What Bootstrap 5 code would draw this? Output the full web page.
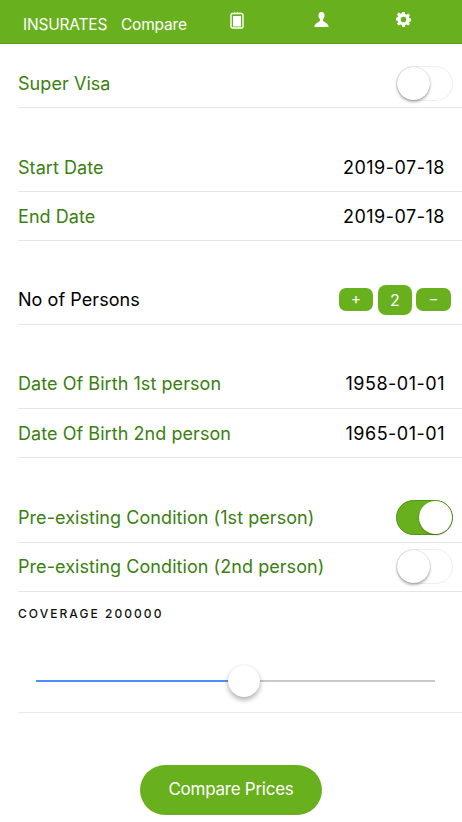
<!DOCTYPE html>
<html lang="en">
<head>
<meta charset="utf-8">
<title>Insurates Compare</title>
<link href="https://cdn.jsdelivr.net/npm/bootstrap@5.3.0/dist/css/bootstrap.min.css" rel="stylesheet">
<style>
html,body{height:822px;overflow:hidden;background:#fff}
body{font-family:Inter,"Liberation Sans",sans-serif;color:#000}
.hdr{height:44px;background:#68b01d;border-bottom:1px solid #5da318;color:#fff;padding-left:23px}
.hdr-title{font-size:15.5px;letter-spacing:-.2px;width:98px;padding-top:6px}
.hdr-cmp{font-size:15.5px;letter-spacing:-.2px;width:109px;padding-top:6px}
.hdr-ico{position:relative;display:flex}
.ico1{margin-right:70px;margin-top:-4px}
.ico2{margin-right:67px;margin-top:-4px}
.ico3{margin-top:-4px}
.sheet{padding-left:18px}
.rowline{height:49px;border-bottom:1px solid #e6e6e6;font-size:18px;letter-spacing:.06px;padding-right:18px}
.lift{padding-bottom:1px}
.grn{color:#3a8010}
.gap-top{margin-top:35px}
.gap-extra{margin-top:36px}
.first{margin-top:15px}
.val{font-size:18px;color:#000;letter-spacing:.5px;margin-right:-1px}
.tgl{width:57px;height:35px;border-radius:18px;border:1px solid #eee;background:#fff;position:relative;margin-right:-9px}
.tgl::after{content:"";position:absolute;left:0;top:0;width:33px;height:33px;border-radius:50%;background:#fff;box-shadow:0 2px 3px rgba(0,0,0,.3),0 0 1px rgba(0,0,0,.3)}
.tgl.on{background:#68b01d;border-color:#4f9512}
.tgl.on::after{left:22px;box-shadow:0 1px 2px rgba(0,0,0,.3)}
.stp{background:#68b01d;color:#fff;border:0;border-radius:7px;width:34px;height:23px;font-size:15px;line-height:22px;padding:0;text-align:center}
.stp.mid{width:34px;height:30px;line-height:30px;font-size:16px;border-radius:8px}
.stp-wrap{gap:5px;margin-right:-7px}
.stp-wide{width:35px;margin-left:-1px}
.covlbl{font-size:12px;letter-spacing:2.05px;line-height:14px;margin-top:15px;color:#111;font-weight:500}
.slidebox{height:92px;border-bottom:1px solid #e9e9e9;position:relative}
.track{position:absolute;left:18px;right:27px;top:59px;height:2px;background:#c8c8c8}
.fill{height:2px;background:#4c8dff}
.thumb{position:absolute;left:210px;top:44px;width:32px;height:32px;border-radius:50%;background:#fff;box-shadow:0 3px 5px rgba(0,0,0,.3),0 0 1px rgba(0,0,0,.15)}
.cta{width:182px;height:50px;border-radius:25px;background:#68b01d;color:#fff;font-size:17px;letter-spacing:-.25px;border:0;margin-top:52px}
.cta:hover{background:#68b01d;color:#fff}
</style>
</head>
<body>
<div class="hdr d-flex align-items-center">
  <div class="hdr-title">INSURATES</div>
  <div class="hdr-cmp">Compare</div>
  <span class="hdr-ico ico1">
    <svg width="14" height="18" viewBox="0 0 14 18"><rect x="1" y="2.500" width="12" height="14.500" rx="1.500" fill="none" stroke="#fff" stroke-width="1.400"/><rect x="3" y="5" width="8" height="10.500" fill="#fff"/><path d="M3 2.600 4.500 1.200 6 2.600 7.200 1 8.600 2.600 10 1.200 11 2.600Z" fill="#fff"/></svg>
  </span>
  <span class="hdr-ico ico2">
    <svg width="15" height="15" viewBox="0 0 15 15"><path d="M7.500 0C5.400 0 4.400 1.600 4.400 3.500c0 1.600.7 3 1.600 3.800v1.300C5 10.400 .5 11.500.3 15h14.400c-.2-3.500-4.700-4.600-5.700-6.400V7.300c.9-.8 1.600-2.200 1.600-3.800C10.600 1.600 9.600 0 7.500 0Z" fill="#fff"/></svg>
  </span>
  <span class="hdr-ico ico3">
    <svg width="15" height="15" viewBox="0 0 16 16"><path fill="#fff" fill-rule="evenodd" d="M6.600 0h2.800l.4 2.200 1.300.6L13 1.500l2 2-1.300 1.900.6 1.300 2.200.4v2.800l-2.200.4-.6 1.300L15 12.500l-2 2-1.900-1.300-1.300.6-.4 2.200H6.600l-.4-2.200-1.300-.6L3 14.500l-2-2 1.300-1.900-.6-1.300L-.5 8.900V6.100l2.200-.4.6-1.300L1 2.500l2-2 1.900 1.300 1.300-.6ZM8 5a3 3 0 1 0 0 6 3 3 0 0 0 0-6Z"/></svg>
  </span>
</div>
<div class="sheet">
  <div class="rowline first d-flex align-items-center justify-content-between grn"><span>Super Visa</span><span class="tgl"></span></div>
  <div class="rowline gap-top d-flex align-items-center justify-content-between grn"><span>Start Date</span><span class="val">2019-07-18</span></div>
  <div class="rowline d-flex align-items-center justify-content-between grn"><span>End Date</span><span class="val">2019-07-18</span></div>
  <div class="rowline lift gap-top d-flex align-items-center justify-content-between"><span>No of Persons</span>
    <span class="d-flex align-items-center stp-wrap"><span class="stp">+</span><span class="stp mid">2</span><span class="stp stp-wide">−</span></span></div>
  <div class="rowline lift gap-top d-flex align-items-center justify-content-between grn"><span>Date Of Birth 1st person</span><span class="val">1958-01-01</span></div>
  <div class="rowline d-flex align-items-center justify-content-between grn"><span>Date Of Birth 2nd person</span><span class="val">1965-01-01</span></div>
  <div class="rowline lift gap-extra d-flex align-items-center justify-content-between grn"><span>Pre-existing Condition (1st person)</span><span class="tgl on"></span></div>
  <div class="rowline lift d-flex align-items-center justify-content-between grn"><span>Pre-existing Condition (2nd person)</span><span class="tgl"></span></div>
  <div class="covlbl">COVERAGE 200000</div>
  <div class="slidebox"><div class="track"><div class="fill w-50"></div></div><div class="thumb"></div></div>
</div>
<div class="d-flex justify-content-center"><button class="btn cta" type="button">Compare Prices</button></div>
<script src="https://cdn.jsdelivr.net/npm/bootstrap@5.3.0/dist/js/bootstrap.bundle.min.js"></script>
</body>
</html>
